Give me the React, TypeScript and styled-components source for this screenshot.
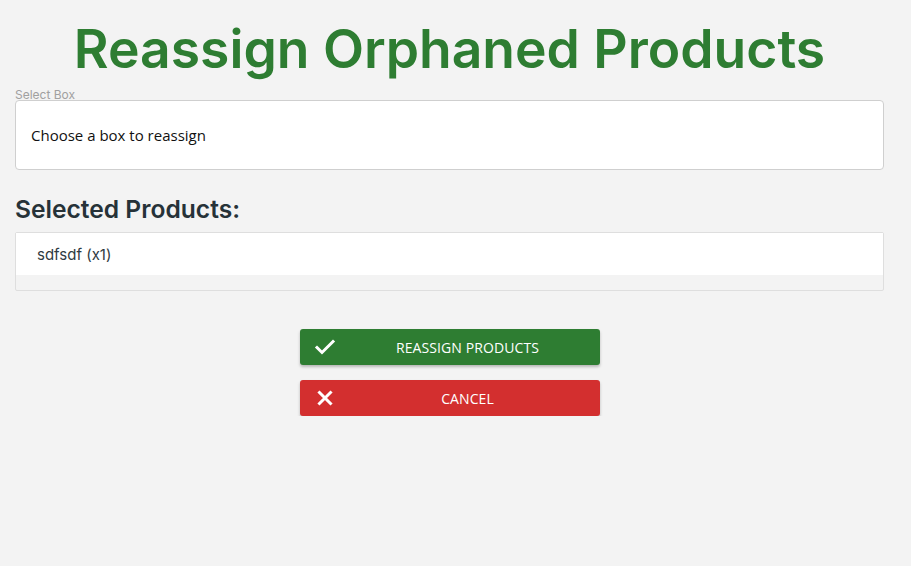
import React from "react";
import styled, { createGlobalStyle } from "styled-components";

const Global = createGlobalStyle`
  html, body { margin: 0; padding: 0; background: #f3f3f3; }
  body { font-family: Inter, "Noto Sans", sans-serif; }
`;

const Page = styled.div`
  padding: 0 27px 0 15px;
  display: flex;
  flex-direction: column;
`;

const Title = styled.h1`
  margin: 14px 0 0;
  text-align: center;
  font-family: Inter, sans-serif;
  font-weight: 600;
  font-size: 53.4px;
  line-height: 70px;
  color: #2e7d32;
`;

const Field = styled.div`
  position: relative;
  margin-top: 16px;
`;

const FieldLabel = styled.label`
  position: absolute;
  left: 0;
  top: -12px;
  font-family: Inter, sans-serif;
  font-size: 12px;
  line-height: 14px;
  color: #a0a0a0;
`;

const SelectBox = styled.div`
  height: 68px;
  background: #fff;
  border: 1px solid #cfcfcf;
  border-radius: 4px;
  display: flex;
  align-items: center;
  padding: 0 15px;
  font-family: "Open Sans", "Noto Sans", sans-serif;
  font-size: 15px;
  color: #111;
`;

const SectionTitle = styled.h2`
  margin: 24px 0 0;
  font-family: Inter, sans-serif;
  font-weight: 600;
  font-size: 24.6px;
  line-height: 30px;
  color: #263238;
`;

const ProductList = styled.div`
  margin-top: 8px;
  border: 1px solid #dedede;
  border-radius: 2px;
  background: #f3f3f3;
  padding-bottom: 15px;
`;

const ProductRow = styled.div`
  height: 42px;
  background: #fff;
  display: flex;
  align-items: center;
  padding: 0 21px;
  font-family: Inter, sans-serif;
  font-size: 15px;
  color: #2f3b42;
`;

const Actions = styled.div`
  margin-top: 38px;
  display: flex;
  flex-direction: column;
  align-items: center;
  gap: 15px;
`;

const Button = styled.button<{ $tone: "green" | "red" }>`
  width: 300px;
  height: 36px;
  border: none;
  border-radius: 3px;
  padding: 0 0 0 14px;
  display: flex;
  align-items: center;
  background: ${(p) => (p.$tone === "green" ? "#2e7d32" : "#d32f2f")};
  color: #fff;
  box-shadow: 0 2px 3px rgba(0, 0, 0, 0.25);
  font-family: "Open Sans", sans-serif;
  font-weight: 500;
  font-size: 14px;
  letter-spacing: 0.1px;
  cursor: pointer;
`;

const IconWrap = styled.span`
  width: 22px;
  height: 22px;
  display: flex;
  align-items: center;
  justify-content: center;
`;

const ButtonText = styled.span`
  flex: 1;
  text-align: center;
`;

const CheckIcon = () => (
  <svg width="22" height="22" viewBox="0 0 22 22">
    <path
      d="M3 11.5 8 16.5 19 5.5"
      fill="none"
      stroke="#fff"
      strokeWidth="3"
      strokeLinecap="square"
    />
  </svg>
);

const CloseIcon = () => (
  <svg width="22" height="22" viewBox="0 0 22 22">
    <path
      d="M5.5 5.5 16.5 16.5 M16.5 5.5 5.5 16.5"
      fill="none"
      stroke="#fff"
      strokeWidth="3"
      strokeLinecap="square"
    />
  </svg>
);

export default function App() {
  return (
    <>
      <Global />
      <Page>
        <Title>Reassign Orphaned Products</Title>
        <Field>
          <FieldLabel>Select Box</FieldLabel>
          <SelectBox>Choose a box to reassign</SelectBox>
        </Field>
        <SectionTitle>Selected Products:</SectionTitle>
        <ProductList>
          <ProductRow>sdfsdf (x1)</ProductRow>
        </ProductList>
        <Actions>
          <Button $tone="green">
            <IconWrap>
              <CheckIcon />
            </IconWrap>
            <ButtonText>REASSIGN PRODUCTS</ButtonText>
          </Button>
          <Button $tone="red">
            <IconWrap>
              <CloseIcon />
            </IconWrap>
            <ButtonText>CANCEL</ButtonText>
          </Button>
        </Actions>
      </Page>
    </>
  );
}
